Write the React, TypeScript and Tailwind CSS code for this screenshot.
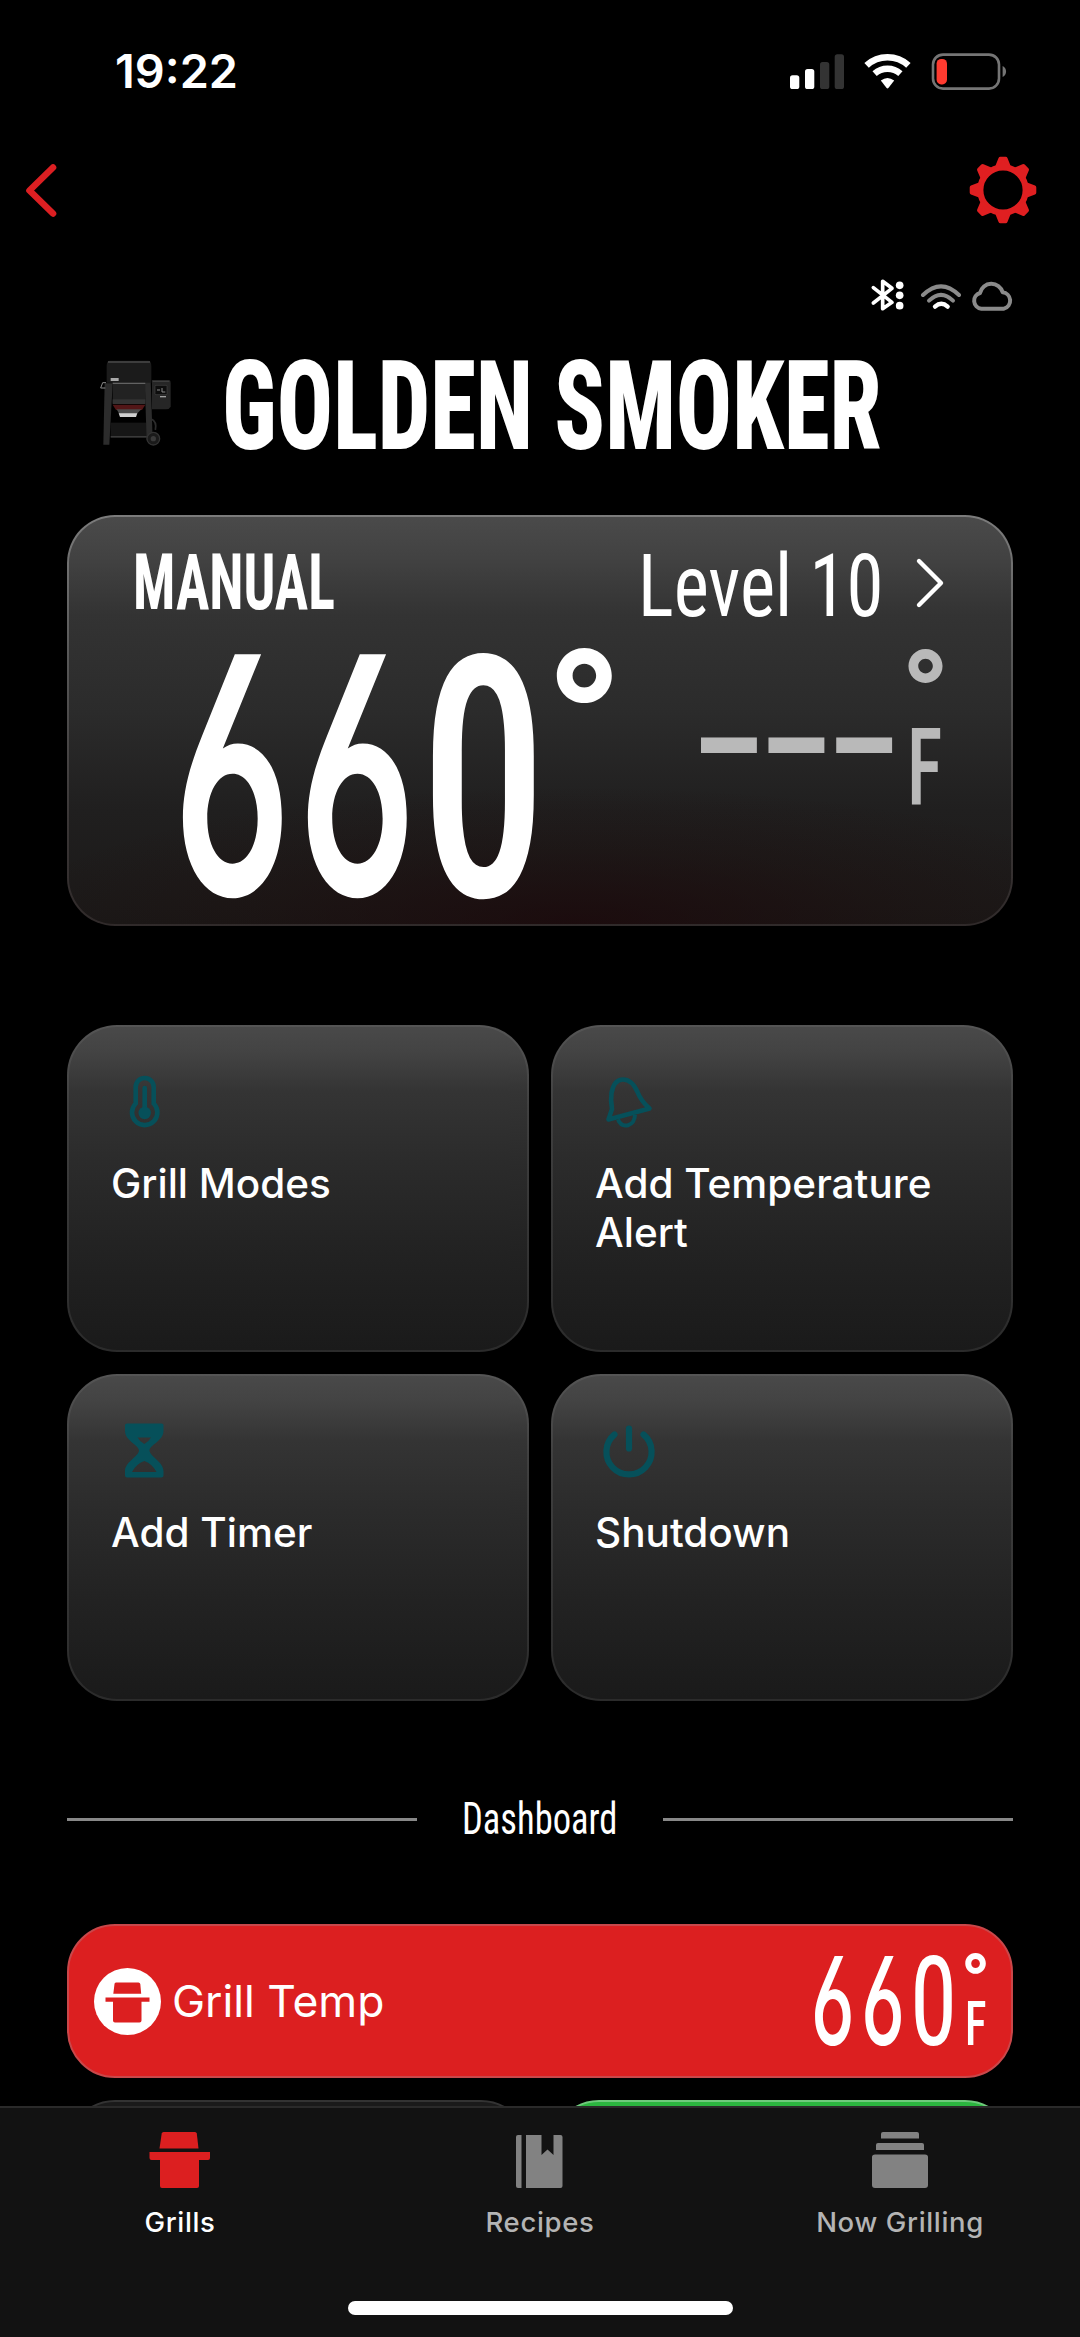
import type { ReactNode } from "react";
import clsx from "clsx";

const TEETH = [0, 45, 90, 135, 180, 225, 270, 315];

const StatusBar = () => (
	<header className="flex h-[130px] shrink-0 items-start justify-between pt-[47px] pr-[73px] pl-[115px]">
		<span className="font-['Inter',sans-serif] text-[46.8px] leading-[48px] font-semibold">19:22</span>
		<div className="flex pt-[6px]">
			<svg className="h-[37px] w-[54px]" viewBox="0 0 54 37">
				<rect x="0" y="22.3" width="9.3" height="13.7" rx="2.6" fill="#fff" />
				<rect x="15" y="16" width="9.3" height="20" rx="2.6" fill="#fff" />
				<rect x="30" y="9" width="9.3" height="27" rx="2.6" fill="#333" />
				<rect x="44.7" y="1.3" width="9.3" height="34.7" rx="2.6" fill="#333" />
			</svg>
			<svg className="ml-[20px] h-[37px] w-[48px]" viewBox="0 0 48 37" fill="none" stroke="#fff">
				<path d="M2.6 12.4A31 31 0 0 1 44.4 12.4" strokeWidth="6.6" />
				<path d="M10.6 20.6A19.5 19.5 0 0 1 36.4 20.6" strokeWidth="6.4" />
				<path d="M16.8 27.6Q23.5 22.4 30.2 27.6L24.6 34.8Q23.5 36.2 22.4 34.8Z" fill="#fff" stroke="none" />
			</svg>
			<svg className="ml-[19px] h-[37px] w-[76px]" viewBox="0 0 76 37">
				<rect x="2" y="1.6" width="66" height="34" rx="10" fill="none" stroke="#757575" strokeWidth="2.6" />
				<rect x="5.6" y="6" width="10.4" height="25.4" rx="4.6" fill="#ff3b30" />
				<path d="M71.6 13c4.6 2 4.6 9 0 11z" fill="#757575" />
			</svg>
		</div>
	</header>
);

const NavBar = () => (
	<nav className="flex h-[120px] shrink-0 items-center justify-between pr-[43px] pl-[23px]">
		<svg className="h-[58px] w-[36px]" viewBox="0 0 36 58" fill="none" stroke="#dc1f22" strokeWidth="6.6" strokeLinecap="round" strokeLinejoin="round">
			<path d="M30 6.5L6.500 29.500L30 52.500" />
		</svg>
		<svg className="size-[68px]" viewBox="-34 -34 68 68" fill="#e01f21" stroke="#e01f21" strokeLinejoin="round">
			<circle r="22.700" fill="none" strokeWidth="6.200" />
			{TEETH.map((deg) => (
				<path key={deg} d="M-5.500 -24L-2.600 -31.300H2.600L5.500 -24Z" strokeWidth="4" transform={`rotate(${deg})`} />
			))}
		</svg>
	</nav>
);

const ConnectionIcons = () => (
	<div className="mt-[25px] flex h-[38px] shrink-0 justify-end pr-[65px]">
		<svg className="h-[38px] w-[36px]" viewBox="270 705 108 114" fill="none" stroke="#fff" strokeWidth="11" strokeLinecap="round" strokeLinejoin="round">
			<path d="M280 743L336 787L308 806V724L336 745L280 789" />
			<g fill="#fff" stroke="none">
				<circle cx="359" cy="736" r="11.500" />
				<circle cx="359" cy="766" r="11.500" />
				<circle cx="359" cy="797" r="11.500" />
			</g>
		</svg>
		<svg className="ml-[13px] h-[38px] w-[44px]" viewBox="417 705 132 114" fill="none" strokeLinecap="round">
			<path d="M429 765Q483 713 537 765" stroke="#8a8a8a" strokeWidth="12" />
			<path d="M447 782Q483 747 519 782" stroke="#8a8a8a" strokeWidth="12" />
			<path d="M465 800Q484 783 503 800" stroke="#fff" strokeWidth="13" />
		</svg>
		<svg className="ml-[7px] h-[38px] w-[45px]" viewBox="570 705 135 114" fill="none" stroke="#8a8a8a" strokeWidth="12" strokeLinejoin="round">
			<path d="M604 806A24 24 0 0 1 600 759A35 35 0 0 1 668 757A25 25 0 0 1 672 806Z" />
		</svg>
	</div>
);

// Pellet grill product shot
const GrillPicture = () => (
	<svg className="size-[120px] shrink-0" viewBox="0 0 360 360">
		<rect x="92" y="248" width="112" height="42" fill="#161616" />
		<rect x="92" y="288" width="112" height="5" fill="#3a3a3a" />
		<path d="M74 130H98L88 314H70Z" fill="#2c2c2c" />
		<path d="M194 120H212L218 300H200Z" fill="#2c2c2c" />
		<path d="M80 128V78Q80 62 90 62H204Q214 62 214 78V128Z" fill="#1b1b1b" />
		<path d="M84 66H210" stroke="#4a4a4a" strokeWidth="4" />
		<rect x="98" y="126" width="98" height="64" fill="#222" />
		<path d="M98 130H196" stroke="#707070" strokeWidth="3" />
		<rect x="92" y="114" width="24" height="9" fill="#a8a8a8" />
		<path d="M78 128H68L62 144H76" fill="none" stroke="#8a8a8a" strokeWidth="3" />
		<rect x="98" y="178" width="98" height="14" fill="#333" />
		<path d="M98 194H196L186 210H108Z" fill="#521617" />
		<path d="M110 208H184L170 222H118Z" fill="#4a4a4a" />
		<path d="M116 220H172L168 231H120Z" fill="#d0d0d0" />
		<path d="M216 120H266Q272 120 272 130V200Q268 208 258 208H216Z" fill="#262626" />
		<path d="M218 124H268" stroke="#444" strokeWidth="3" />
		<rect x="225" y="136" width="36" height="28" rx="3" fill="#0d0d0d" stroke="#444" strokeWidth="2" />
		<path d="M231 150H240M246 144V156H256" stroke="#8c8c8c" strokeWidth="3" fill="none" />
		<path d="M240 170H258" stroke="#a0a0a0" strokeWidth="4" />
		<path d="M212 236Q232 244 226 270" fill="none" stroke="#2c2c2c" strokeWidth="5" />
		<circle cx="220" cy="296" r="19" fill="#1a1a1a" stroke="#333" strokeWidth="4" />
		<circle cx="220" cy="296" r="8" fill="#3a3a3a" />
	</svg>
);

const TemperatureCard = () => (
	<section className="mx-[67px] mt-[55px] flex h-[411px] shrink-0 flex-col rounded-[48px] border-2 border-transparent pt-[23px] [background:radial-gradient(ellipse_62%_34%_at_54%_100%,rgba(28,6,9,0.7),rgba(28,10,10,0.3)_55%,transparent)_padding-box,linear-gradient(#4a4a4a,#424242_10%,#333_24%,#2b2b2b_48%,#201f1f_72%,#1b1918)_padding-box,linear-gradient(#7c7c7c,#575757_35%,#3a3636_75%,#302a2a)_border-box]">
		<div className="flex h-[90px] pl-[64px]">
			<div className="mt-[5px] w-[505px]">
				<span className="block origin-left scale-x-[0.726] font-['Roboto_Condensed',sans-serif] text-[77px] leading-[77px] font-bold whitespace-nowrap">MANUAL</span>
			</div>
			<div className="w-[277px]">
				<span className="block origin-left scale-x-[0.852] font-['Roboto_Condensed',sans-serif] text-[88px] leading-[91px] font-[450] whitespace-nowrap">Level 10</span>
			</div>
			<svg className="mt-[17px] h-[52px] w-[30px]" viewBox="0 0 30 52" fill="none" stroke="#fff" strokeWidth="4.400" strokeLinecap="round" strokeLinejoin="round">
				<path d="M4 4L26 26L4 48" />
			</svg>
		</div>
		<div className="flex pl-[104px]">
			<span className="mt-[20px] block w-[247px] origin-left scale-x-[0.594] font-['Inter',sans-serif] text-[331px] leading-[250px] font-semibold tracking-[10.600px] [font-feature-settings:'cv03']">66</span>
			<span className="mt-[26px] block w-[128px] origin-left scale-x-[0.752] font-['Roboto_Condensed',sans-serif] text-[337px] leading-[250px] font-medium">0</span>
			<span className="mt-[7px] block w-[153px] font-['Inter',sans-serif] text-[158px] leading-[140px] font-bold">°</span>
			<span className="mt-[40px] block w-[202px] origin-left scale-x-[0.84] font-['Inter',sans-serif] text-[133px] leading-[133px] font-bold tracking-[14px] whitespace-nowrap text-[#b9b9b9]">–––</span>
			<div className="flex w-[60px] flex-col text-[#b9b9b9]">
				<span className="mt-[16px] block font-['Inter',sans-serif] text-[98px] leading-[80px] font-bold">°</span>
				<span className="mt-[2px] ml-[4px] block origin-left scale-x-[0.69] font-['Roboto_Condensed',sans-serif] text-[107px] leading-[80px] font-medium">F</span>
			</div>
		</div>
	</section>
);

const ThermometerIcon = () => (
	<g fill="none" stroke="#06505a" strokeWidth="4.600">
		<path d="M22.700 17a9 9 0 0 1 18 0v16.500a12.700 12.700 0 1 1 -18 0z" />
		<path d="M31.700 18V42" strokeLinecap="round" />
		<circle cx="31.700" cy="43" r="6.200" fill="#06505a" stroke="none" />
	</g>
);

const BellIcon = () => (
	<g fill="none" stroke="#06505a" strokeWidth="4.600" strokeLinejoin="round">
		<path d="M11.500 49.500L15 39Q13.500 30 14.500 23Q17 9.500 26 9.500Q35 9.500 40.500 22Q44 31 52.500 38.500Z" />
		<path d="M21 49.500Q24 57 31 55.200Q37.500 53.500 38 45" strokeWidth="4" />
	</g>
);

const HourglassIcon = () => (
	<path
		fill="#06505a"
		fillRule="evenodd"
		d="M12 6Q12 4.500 14 4.500H48.500Q50.500 4.500 50.500 6V12C50.500 22 36.500 26 36.500 31.500S50.500 43 50.500 52V56.500Q50.500 58.500 48.500 58.500H14Q12 58.500 12 56.500V52C12 43 26 37 26 31.500S12 22 12 12ZM24.500 18.500Q27 23 31.300 25Q35.500 23 38 18.500ZM31.300 42Q23 45 19 53H43.500Q39.500 45 31.300 42Z"
	/>
);

const PowerIcon = () => (
	<g fill="none" stroke="#06505a" strokeWidth="6.200" strokeLinecap="round">
		<path d="M17.500 15.500A22.600 22.600 0 1 0 46.500 15.500" />
		<path d="M32 9.500V29.500" />
	</g>
);

interface ActionTileProps {
	label: string;
	children: ReactNode;
}

const ActionTile = ({ label, children }: ActionTileProps) => (
	<div className="h-[327px] rounded-[50px] border-2 border-transparent pt-[43px] pr-10 pl-[42px] [background:linear-gradient(#494949,#434343_8%,#343434_20%,#2b2b2b_42%,#222_70%,#1a1a1a)_padding-box,linear-gradient(#555,#404040_25%,#2b2b2b)_border-box]">
		<svg className="ml-[2px] size-[64px]" viewBox="0 0 64 64">
			{children}
		</svg>
		<p className="mt-[26px] font-['Inter',sans-serif] text-[40.500px] leading-[48.500px] font-medium">{label}</p>
	</div>
);

const SectionDivider = () => (
	<div className="mx-[67px] mt-[94px] flex h-[48px] shrink-0 items-center">
		<div className="h-[3px] w-[350px] bg-[#888]" />
		<div className="w-[246px] pl-[44.500px]">
			<span className="block origin-left scale-x-[0.83] font-['Roboto_Condensed',sans-serif] text-[44px] leading-[48px] whitespace-nowrap">Dashboard</span>
		</div>
		<div className="h-[3px] w-[350px] bg-[#888]" />
	</div>
);

const GrillTempCard = () => (
	<section className="mx-[67px] mt-[81px] flex h-[154px] shrink-0 items-center rounded-[48px] border-2 border-[#c9474a] bg-[#dc1f20] pl-[25px]">
		<svg className="size-[67px]" viewBox="0 0 67 67" fill="#dc1f20">
			<circle cx="33.500" cy="33.500" r="33.500" fill="#fff" />
			<path d="M22 14.500H44.500Q46 14.500 46.300 16L47.200 25.700H19.300L20.500 16Q20.500 14.500 22 14.500Z" />
			<path d="M11.500 29.500H55.500V33.700H47.500V52.500Q47.500 54.500 45.500 54.500H21Q19 54.500 19 52.500V33.700H11.500Z" />
		</svg>
		<span className="ml-[11px] flex-1 font-['Inter',sans-serif] text-[44.400px] leading-[60px]">Grill Temp</span>
		<div className="flex h-[92px] w-[200px]">
			<span className="block w-[99px] origin-left scale-x-[0.6] font-['Inter',sans-serif] text-[123px] leading-[92px] font-medium tracking-[11px] [font-feature-settings:'cv03']">66</span>
			<span className="mt-[2px] block w-[52px] origin-left scale-x-[0.764] font-['Roboto_Condensed',sans-serif] text-[125px] leading-[92px] font-[450]">0</span>
			<div className="w-[49px]">
				<span className="block font-['Inter',sans-serif] text-[59px] leading-[40px] font-bold">°</span>
				<span className="mt-[4.500px] ml-[3px] block origin-left scale-x-[0.73] font-['Roboto_Condensed',sans-serif] text-[61.500px] leading-[48px] font-medium">F</span>
			</div>
		</div>
	</section>
);

interface TabItemProps {
	label: string;
	active?: boolean;
	children: ReactNode;
}

const TabItem = ({ label, active = false, children }: TabItemProps) => (
	<div className={clsx("flex flex-1 flex-col items-center", active ? "text-white" : "text-[#b4b4b4]")}>
		<svg className="h-[56px] w-[62px]" viewBox="0 0 62 56" fill={active ? "#dc1f20" : "#828282"}>
			{children}
		</svg>
		<span className="mt-[18px] font-['Inter',sans-serif] text-[27.500px] leading-[32px] font-medium tracking-[0.650px]">{label}</span>
	</div>
);

const TabBar = () => (
	<footer className="flex h-[231px] shrink-0 flex-col border-t-2 border-[#2a2a2a] bg-[#121212] pt-[24px]">
		<div className="flex">
			<TabItem label="Grills" active>
				<path d="M14.500 0H46Q47.500 0 47.800 1.500L49.500 16.500H10.500L12.700 1.500Q13 0 14.500 0Z" />
				<path d="M0.500 20H61V26Q61 28 59 28H50V54Q50 56 48 56H13Q11 56 11 54V28H2.500Q0.500 28 0.500 26Z" />
			</TabItem>
			<TabItem label="Recipes">
				<path d="M9 3H12.500V56H9Q7 56 7 54V5Q7 3 9 3Z" />
				<path d="M17 3H32.500V23L38.500 17.500L44.500 23V3H51.500Q53.500 3 53.500 5V54Q53.500 56 51.500 56H17Z" />
			</TabItem>
			<TabItem label="Now Grilling">
				<path d="M14 0H48Q50 0 50 2V6.500H12V2Q12 0 14 0Z" />
				<path d="M9 11H53Q55 11 55 13V18H7V13Q7 11 9 11Z" />
				<path d="M6 22.500H56Q59 22.500 59 25V53Q59 56 56 56H6Q3 56 3 53V25Q3 22.500 6 22.500Z" />
			</TabItem>
		</div>
		<div className="mx-auto mt-[63px] h-[14px] w-[385px] rounded-full bg-white" />
	</footer>
);

export default function App() {
	return (
		<div className="flex h-[2337px] w-[1080px] flex-col overflow-hidden bg-black text-white">
			<StatusBar />
			<main className="flex min-h-0 flex-1 flex-col overflow-hidden">
				<NavBar />
				<ConnectionIcons />
				<div className="mt-[27px] flex h-[120px] shrink-0 pl-[80px]">
					<GrillPicture />
					<h1 className="mt-[4px] ml-[22px] origin-left scale-x-[0.746] font-['Roboto_Condensed',sans-serif] text-[125px] leading-[125px] font-extrabold whitespace-nowrap">GOLDEN SMOKER</h1>
				</div>
				<TemperatureCard />
				<section className="mx-[67px] mt-[99px] grid shrink-0 grid-cols-2 gap-[22px]">
					<ActionTile label="Grill Modes"><ThermometerIcon /></ActionTile>
					<ActionTile label="Add Temperature Alert"><BellIcon /></ActionTile>
					<ActionTile label="Add Timer"><HourglassIcon /></ActionTile>
					<ActionTile label="Shutdown"><PowerIcon /></ActionTile>
				</section>
				<SectionDivider />
				<GrillTempCard />
				{/* Next dashboard row, mostly hidden behind the tab bar */}
				<div className="mx-[67px] mt-[22px] grid shrink-0 grid-cols-2 gap-[22px]">
					<div className="h-[154px] rounded-[48px] border-2 border-[#333] bg-[#1a1a1a]" />
					<div className="h-[154px] rounded-[48px] border-2 border-[#6fc97c] bg-[#2bb53f]" />
				</div>
			</main>
			<TabBar />
		</div>
	);
}
